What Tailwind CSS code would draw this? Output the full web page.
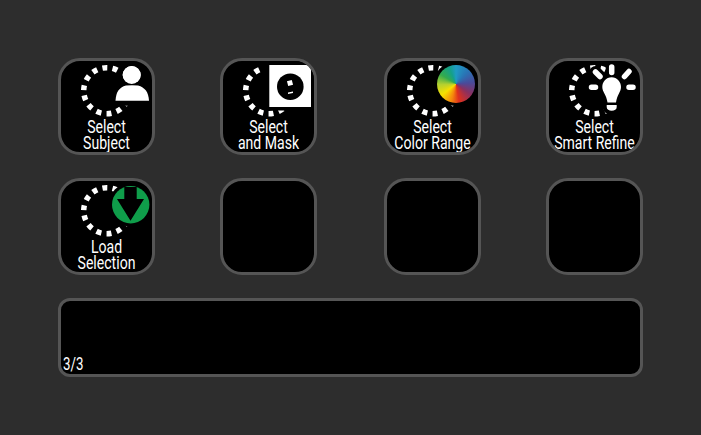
<!DOCTYPE html>
<html lang="en">
<head>
    <meta charset="UTF-8">
    <title>Selection Keys</title>
    <script src="https://cdn.jsdelivr.net/npm/@tailwindcss/browser@4"></script>
</head>
<body class="bg-[#2d2d2d] w-[701px] h-[435px] overflow-hidden font-['Roboto',sans-serif] text-white">
    <!-- shared dotted selection ring -->
    <svg class="hidden">
        <symbol id="ring" viewBox="0 0 91 66">
            <circle cx="45.7" cy="29.7" r="23" fill="none" stroke="#fff" stroke-width="5.500" stroke-dasharray="5 5.32" stroke-dashoffset="-0.1"/>
        </symbol>
    </svg>

    <div class="pt-[58px] pl-[58px] w-[643px] flex flex-col gap-[23px]">
        <!-- row 1 -->
        <div class="flex">
            <div class="relative w-[97px] h-[97px] rounded-[22px] border-[3px] border-[#555] bg-black overflow-hidden">
                <svg class="w-[91px] h-[66px] block" viewBox="0 0 91 66">
                    <use href="#ring"/>
                    <circle cx="70.7" cy="14" r="9" fill="#fff" stroke="#000" stroke-width="10" paint-order="stroke"/>
                    <path d="M54.5 39.700C55 31 58 26.500 65 24.500Q71 24 77 24.500C84 26.500 87.500 31 88 39.700Z" fill="#fff" stroke="#000" stroke-width="10" paint-order="stroke"/>
                    <circle cx="70.7" cy="14" r="9" fill="#fff"/>
                </svg>
                <p class="-mx-[12px] mt-[-8px] text-[19px] leading-[16px] text-center scale-x-[.74] whitespace-nowrap">Select<br>Subject</p>
            </div>
            <div class="relative ml-[65px] w-[97px] h-[97px] rounded-[22px] border-[3px] border-[#555] bg-black overflow-hidden">
                <svg class="w-[91px] h-[66px] block" viewBox="0 0 91 66">
                    <use href="#ring"/>
                    <rect x="41" y="-2" width="50" height="51.500" fill="#000"/>
                    <rect x="46.300" y="4" width="41.700" height="42" fill="#fff"/>
                    <circle cx="67.300" cy="25.700" r="13.300" fill="#000"/>
                    <rect x="64.500" y="19.500" width="5" height="5" fill="#fff" transform="rotate(-15 67 22)"/>
                    <path d="M65 31.500L70 30.500V32L65 33Z" fill="#fff"/>
                </svg>
                <p class="-mx-[12px] mt-[-8px] text-[19px] leading-[16px] text-center scale-x-[.74] whitespace-nowrap">Select<br>and Mask</p>
            </div>
            <div class="relative ml-[67px] w-[97px] h-[97px] rounded-[22px] border-[3px] border-[#555] bg-black overflow-hidden">
                <svg class="w-[91px] h-[66px] block" viewBox="0 0 91 66">
                    <use href="#ring"/>
                    <circle cx="68.500" cy="23" r="22" fill="#000"/>
                </svg>
                <div class="absolute left-[50px] top-[4px] w-[37.500px] h-[37.500px] rounded-full bg-[conic-gradient(from_0deg,#1f9bc4,#2a72b4_45deg,#4a4a9a_85deg,#8a3060_125deg,#e0301c_170deg,#f5860c_195deg,#f7e000_232deg,#b5d030_268deg,#34ab4c_302deg,#14a08a_338deg,#1f9bc4)]"></div>
                <p class="-mx-[12px] mt-[-8px] text-[19px] leading-[16px] text-center scale-x-[.74] whitespace-nowrap">Select<br>Color Range</p>
            </div>
            <div class="relative ml-[65px] w-[97px] h-[97px] rounded-[22px] border-[3px] border-[#555] bg-black overflow-hidden">
                <svg class="w-[91px] h-[66px] block" viewBox="0 0 91 66">
                    <use href="#ring"/>
                    <g fill="none" stroke="#000" stroke-width="12" stroke-linecap="round">
                        <path d="M62.700 6V11.500M46.500 11L51 15.500M42.500 26.300H46.500M80 10.500L75.500 15.500M80 26.300H84"/>
                    </g>
                    <path d="M62.700 16.300C57 16.300 53.300 21 53.300 26C53.300 31 57.500 34 58.500 41.500H67C68 34 72 31 72 26C72 21 68 16.300 62.700 16.300Z" fill="#000" stroke="#000" stroke-width="9"/>
                    <path d="M57.700 44H67.700V46C67.700 48.500 65.500 49.700 62.700 49.700C60 49.700 57.700 48.500 57.700 46Z" fill="#000" stroke="#000" stroke-width="8"/>
                    <path d="M62.700 16.300C57 16.300 53.300 21 53.300 26C53.300 31 57.500 34 58.500 41.500H67C68 34 72 31 72 26C72 21 68 16.300 62.700 16.300Z" fill="#fff"/>
                    <path d="M57.700 44H67.700V46C67.700 48.500 65.500 49.700 62.700 49.700C60 49.700 57.700 48.500 57.700 46Z" fill="#fff"/>
                    <path d="M62.700 6V11.500M46.500 11L51 15.500M42.500 26.300H46.500M80 10.500L75.500 15.500M80 26.300H84" fill="none" stroke="#fff" stroke-width="5.500" stroke-linecap="round"/>
                </svg>
                <p class="-mx-[12px] mt-[-8px] text-[19px] leading-[16px] text-center scale-x-[.74] whitespace-nowrap">Select<br>Smart Refine</p>
            </div>
        </div>
        <!-- row 2 -->
        <div class="flex">
            <div class="relative w-[97px] h-[97px] rounded-[22px] border-[3px] border-[#555] bg-black overflow-hidden">
                <svg class="w-[91px] h-[66px] block" viewBox="0 0 91 66">
                    <use href="#ring"/>
                    <circle cx="69.700" cy="23.700" r="22" fill="#000"/>
                    <circle cx="69.700" cy="23.700" r="18.700" fill="#0f9d4a"/>
                    <path d="M63.300 6H75.700V18H83L69.500 39.700L56 18H63.300Z" fill="#000"/>
                </svg>
                <p class="-mx-[12px] mt-[-8px] text-[19px] leading-[16px] text-center scale-x-[.74] whitespace-nowrap">Load<br>Selection</p>
            </div>
            <div class="ml-[65px] w-[97px] h-[97px] rounded-[22px] border-[3px] border-[#555] bg-black"></div>
            <div class="ml-[67px] w-[97px] h-[97px] rounded-[22px] border-[3px] border-[#555] bg-black"></div>
            <div class="ml-[65px] w-[97px] h-[97px] rounded-[22px] border-[3px] border-[#555] bg-black"></div>
        </div>
        <!-- info bar -->
        <div class="w-[585px] h-[79px] rounded-[12px] border-[3px] border-[#555] bg-black flex items-end pl-[2px] pb-[2px]">
            <span class="text-[19px] leading-[16px] scale-x-[.7] origin-left">3/3</span>
        </div>
    </div>
</body>
</html>
